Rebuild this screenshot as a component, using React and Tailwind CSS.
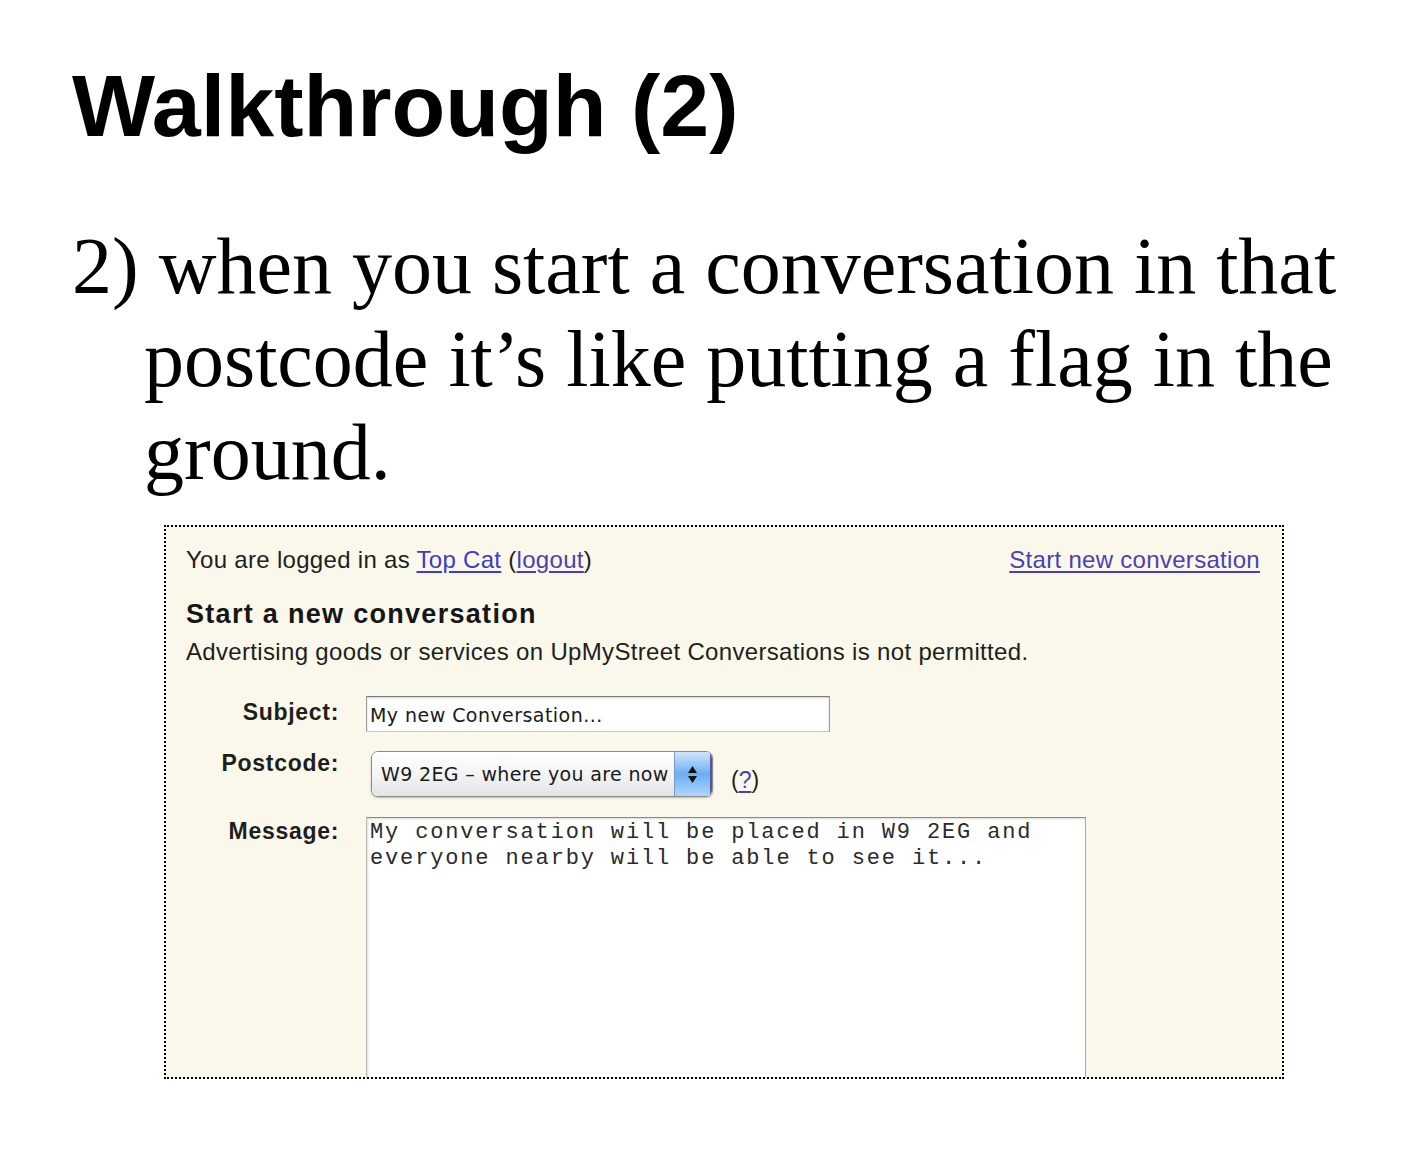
import React from 'react';

const sans = { fontFamily: '"Liberation Sans", Arial, sans-serif' };

// ─────────────────────────────────────────────────────────────────────────────
// Aqua-style select
// ─────────────────────────────────────────────────────────────────────────────
function AquaSelect({ value }) {
	return (
		<div className="flex h-[46px] w-[342px] overflow-hidden rounded-[7px] border border-[#8c8c8c] shadow-[0_1px_2px_rgba(0,0,0,0.25)]">
			<div className="flex flex-1 items-center bg-gradient-to-b from-[#ffffff] via-[#f4f4f4] to-[#e4e4e4] pl-[9px] font-['DejaVu_Sans',sans-serif] text-[19px] tracking-[0.35px] text-[#1a1a1a]">
				{value}
			</div>
			<div className="flex w-[38px] flex-col items-center justify-center gap-[3px] border-l border-[#7d9ccc] border-r-2 border-r-[#5a4fa8] bg-gradient-to-b from-[#cfe6fc] via-[#6aaef0] to-[#aed6fb]">
				<svg width="9" height="7" viewBox="0 0 9 7"><path d="M4.5 0 L9 7 L0 7 Z" fill="#111" /></svg>
				<svg width="9" height="7" viewBox="0 0 9 7"><path d="M0 0 L9 0 L4.5 7 Z" fill="#111" /></svg>
			</div>
		</div>
	);
}

// ─────────────────────────────────────────────────────────────────────────────
// Form panel (screenshot of the site)
// ─────────────────────────────────────────────────────────────────────────────
function ConversationForm() {
	const label = "w-[153px] shrink-0 text-right text-[23px] font-bold leading-[28px] tracking-[0.7px] text-[#1e1e1e]";

	return (
		<div
			className="ml-[92px] h-[554px] w-[1120px] overflow-hidden border-2 border-dotted border-black bg-[#faf8ea]"
			style={sans}
		>
			<div className="pl-[20px] pr-[22px] pt-[19px] text-[#1e1e1e]">
				{/* Top line */}
				<div className="flex items-start justify-between text-[24px] leading-[28px] tracking-[0.3px]">
					<p>
						You are logged in as <span className="text-[#3b3bcc] underline underline-offset-[3px]">Top Cat</span>{' '}
						(<span className="text-[#4c3fb5] underline underline-offset-[3px]">logout</span>)
					</p>
					<span className="text-[#4c3fb5] underline underline-offset-[3px]">Start new conversation</span>
				</div>

				<h2 className="mt-[24px] text-[27px] font-bold leading-[32px] tracking-[1.3px] text-[#161616]">
					Start a new conversation
				</h2>
				<p className="mt-[8px] text-[24px] leading-[28px] tracking-[0.33px]">
					Advertising goods or services on UpMyStreet Conversations is not permitted.
				</p>

				{/* Subject */}
				<div className="mt-[30px] flex items-start gap-[27px]">
					<div className={`${label} pt-[2px]`}>Subject:</div>
					<div className="flex h-[36px] w-[464px] items-center border border-[#9a9a9a] border-t-[#7a7a7a] border-b-[#c8c8c8] bg-white pl-[3px] pt-[2px] font-['DejaVu_Sans',sans-serif] text-[19px] tracking-[0.45px] text-[#1a1a1a] shadow-[inset_0_1px_2px_rgba(0,0,0,0.2)]">
						My new Conversation...
					</div>
				</div>

				{/* Postcode */}
				<div className="mt-[17px] flex items-start gap-[27px]">
					<div className={label}>Postcode:</div>
					<div className="ml-[5px] mt-[2px]">
						<AquaSelect value="W9 2EG – where you are now" />
					</div>
					<div className="ml-[-9px] mt-[17px] text-[23px] leading-[28px]">
						(<span className="text-[#4c3fb5] underline underline-offset-[3px]">?</span>)
					</div>
				</div>

				{/* Message */}
				<div className="mt-[20px] flex items-start gap-[27px]">
					<div className={label}>Message:</div>
					<div className="h-[400px] w-[720px] border border-[#a8a8a8] border-t-[#8a8a8a] border-l-[#bdbdbd] bg-white pl-[3px] pt-[2px] font-['Liberation_Mono','Courier_New',monospace] text-[22px] leading-[25.5px] tracking-[1.85px] whitespace-pre text-[#2a2a2a] shadow-[inset_1px_1px_2px_rgba(0,0,0,0.15)]">
						{'My conversation will be placed in W9 2EG and\neveryone nearby will be able to see it...'}
					</div>
				</div>
			</div>
		</div>
	);
}

// ─────────────────────────────────────────────────────────────────────────────
// Slide
// ─────────────────────────────────────────────────────────────────────────────
export default function App() {
	return (
		<div className="min-h-[1150px] w-[1407px] bg-white pl-[72px] text-black">
			<h1 className="pt-[62px] text-[88px] font-bold leading-[88px]" style={sans}>
				Walkthrough (2)
			</h1>

			<p className="mt-[70px] pl-[72px] -indent-[72px] font-['Liberation_Serif','Times_New_Roman',serif] text-[80px] leading-[93px]">
				2) when you start a conversation in that postcode it’s like putting a flag in the ground.
			</p>

			<div className="mt-[26px]">
				<ConversationForm />
			</div>
		</div>
	);
}
